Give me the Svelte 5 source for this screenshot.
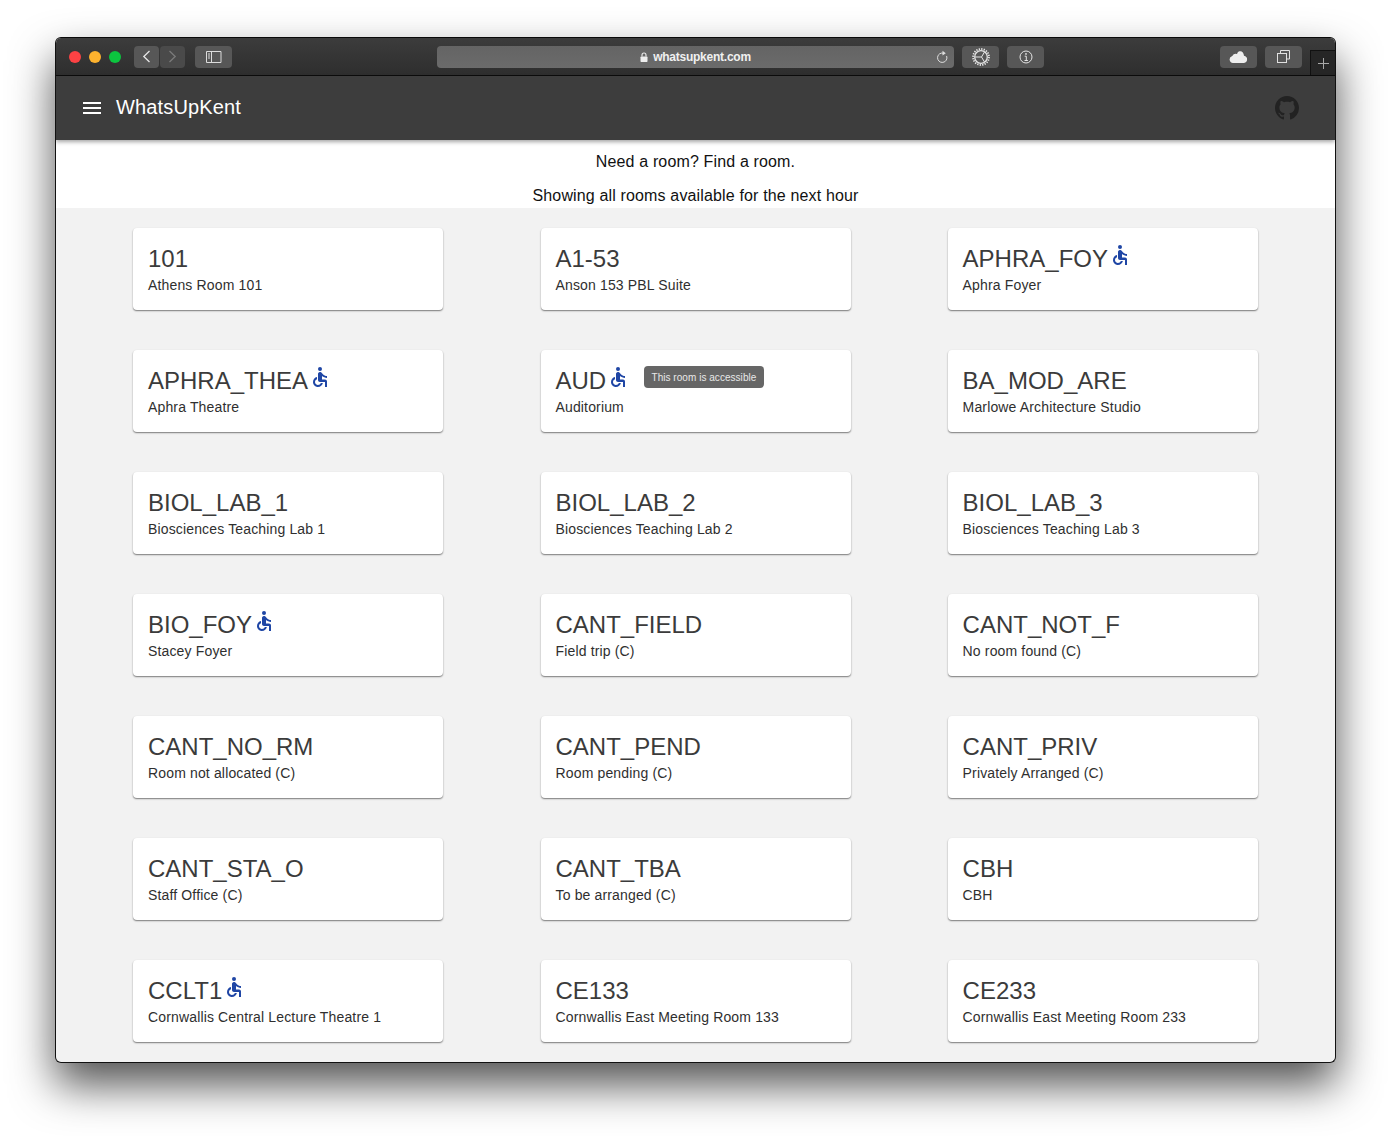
<script>
  const rooms = [
    { code: '101', name: 'Athens Room 101' },
    { code: 'A1-53', name: 'Anson 153 PBL Suite' },
    { code: 'APHRA_FOY', name: 'Aphra Foyer', access: true },
    { code: 'APHRA_THEA', name: 'Aphra Theatre', access: true },
    { code: 'AUD', name: 'Auditorium', access: true, tip: true },
    { code: 'BA_MOD_ARE', name: 'Marlowe Architecture Studio' },
    { code: 'BIOL_LAB_1', name: 'Biosciences Teaching Lab 1' },
    { code: 'BIOL_LAB_2', name: 'Biosciences Teaching Lab 2' },
    { code: 'BIOL_LAB_3', name: 'Biosciences Teaching Lab 3' },
    { code: 'BIO_FOY', name: 'Stacey Foyer', access: true },
    { code: 'CANT_FIELD', name: 'Field trip (C)' },
    { code: 'CANT_NOT_F', name: 'No room found (C)' },
    { code: 'CANT_NO_RM', name: 'Room not allocated (C)' },
    { code: 'CANT_PEND', name: 'Room pending (C)' },
    { code: 'CANT_PRIV', name: 'Privately Arranged (C)' },
    { code: 'CANT_STA_O', name: 'Staff Office (C)' },
    { code: 'CANT_TBA', name: 'To be arranged (C)' },
    { code: 'CBH', name: 'CBH' },
    { code: 'CCLT1', name: 'Cornwallis Central Lecture Theatre 1', access: true },
    { code: 'CE133', name: 'Cornwallis East Meeting Room 133' },
    { code: 'CE233', name: 'Cornwallis East Meeting Room 233' },
  ];
</script>

<div class="page">
  <div class="window">
    <header class="chrome">
      <span class="light red"></span>
      <span class="light amber"></span>
      <span class="light green"></span>

      <div class="btn-pair">
        <span class="btn nav">
          <svg width="9" height="13" viewBox="0 0 9 13"><path d="M7.500 1 1.800 6.500l5.700 5.500" fill="none" stroke="#e6e6e6" stroke-width="1.300"/></svg>
        </span>
        <span class="btn nav">
          <svg width="9" height="13" viewBox="0 0 9 13"><path d="M1.500 1l5.700 5.500L1.500 12" fill="none" stroke="#7b7b7b" stroke-width="1.300"/></svg>
        </span>
      </div>

      <span class="btn side">
        <svg width="16" height="12" viewBox="0 0 16 12"><path d="M.5.5h14.500v11H.5zM5.500.5v11" fill="none" stroke="#dcdcdc"/><path d="M2 3h2M2 5h2M2 7h2" stroke="#dcdcdc"/></svg>
      </span>

      <div class="url">
        <span class="addr">
          <svg width="8" height="10" viewBox="0 0 8 10"><path d="M2 4.500V3a2 2 0 0 1 4 0v1.500" fill="none" stroke="#eee" stroke-width="1.100"/><rect x=".5" y="4.500" width="7" height="5.500" rx=".8" fill="#eee"/></svg>
          whatsupkent.com
        </span>
        <svg class="reload" width="12" height="14" viewBox="0 0 12 14"><path d="M7.800 3.300A4.700 4.700 0 1 0 10.600 6" fill="none" stroke="#ddd" stroke-width="1"/><path d="M6.500.8 9.800 3.200 6.500 5.400z" fill="#ddd"/></svg>
      </div>

      <span class="btn tool">
        <svg width="20" height="20" viewBox="0 0 20 20">
          <circle cx="10" cy="10" r="8" fill="none" stroke="#e4e4e4" stroke-width="1.800" stroke-dasharray="1.300 1.210"/>
          <circle cx="10" cy="10" r="6.300" fill="none" stroke="#e4e4e4" stroke-width="1.300"/>
          <path d="M4 10h6.500l3-5M10.500 10l3 5" fill="none" stroke="#e4e4e4" stroke-width="1"/>
        </svg>
      </span>
      <span class="btn tool">
        <svg width="14" height="14" viewBox="0 0 14 14"><circle cx="7" cy="7" r="6" fill="none" stroke="#e4e4e4"/><path d="M5.700 6.200H7.300V10.500M5.500 10.500h3.400" fill="none" stroke="#e4e4e4"/><circle cx="7" cy="3.900" r=".9" fill="#e4e4e4"/></svg>
      </span>

      <span class="btn tool cloud">
        <svg width="19" height="12" viewBox="0 0 19 12"><path d="M4 12a3.500 3.500 0 0 1-.7-6.900A4 4 0 0 1 8 3a5 5 0 0 1 1.700-2.400c2.700-1.300 5 .6 5.300 4.100A3.700 3.700 0 0 1 15 12z" fill="#eee"/></svg>
      </span>
      <span class="btn tool copy">
        <svg width="13" height="13" viewBox="0 0 13 13"><path d="M3.500 3V.5h9v8.500H10" fill="none" stroke="#e0e0e0"/><rect x=".5" y="3.500" width="9" height="9" fill="none" stroke="#e0e0e0"/></svg>
      </span>
      <span class="newtab">
        <svg width="11" height="11" viewBox="0 0 11 11"><path d="M5.500 0v11M0 5.500h11" stroke="#a8a8a8"/></svg>
      </span>
    </header>

    <div class="appbar">
      <svg class="menu" width="18" height="12" viewBox="0 0 18 12"><path d="M0 0h18v2H0zM0 5h18v2H0zM0 10h18v2H0z" fill="#fff"/></svg>
      <span class="brand">WhatsUpKent</span>
      <svg class="github" width="24" height="24" viewBox="0 0 16 16"><path fill="#222" d="M8 0C3.580 0 0 3.580 0 8c0 3.540 2.290 6.530 5.470 7.590.4.070.55-.17.55-.38 0-.19-.01-.82-.01-1.490-2.010.37-2.530-.49-2.690-.94-.09-.23-.48-.94-.82-1.130-.28-.15-.68-.52-.01-.53.63-.01 1.080.58 1.230.82.720 1.210 1.870.87 2.330.66.070-.52.280-.87.510-1.070-1.780-.2-3.640-.89-3.640-3.950 0-.87.310-1.590.820-2.150-.08-.2-.36-1.020.08-2.120 0 0 .67-.21 2.200.82.640-.18 1.320-.27 2-.27s1.360.09 2 .27c1.530-1.040 2.200-.82 2.200-.82.440 1.100.16 1.920.08 2.120.51.560.82 1.270.82 2.150 0 3.070-1.870 3.750-3.650 3.950.29.250.54.730.54 1.480 0 1.070-.01 1.930-.01 2.200 0 .21.150.460.550.380A8.013 8.013 0 0 0 16 8c0-4.420-3.580-8-8-8z"/></svg>
    </div>

    <div class="intro">
      <p>Need a room? Find a room.</p>
      <p>Showing all rooms available for the next hour</p>
    </div>

    <main class="grid">
      {#each rooms as room}
        <article class="card">
          <h2>
            {room.code}
            {#if room.access}
              <svg class="access" width="24" height="24" viewBox="0 0 24 24"><circle cx="12" cy="4" r="2"/><path d="M19 13v-2c-1.540.02-3.090-.75-4.070-1.830l-1.290-1.430c-.17-.19-.38-.34-.61-.45-.01 0-.01-.01-.02-.01H13c-.35-.2-.75-.3-1.190-.26C10.760 7.110 10 8.040 10 9.090V15c0 1.100.9 2 2 2h5v5h2v-5.500c0-1.100-.9-2-2-2h-3v-3.450c1.290 1.070 3.250 1.940 5 1.950zm-6.170 5c-.41 1.160-1.520 2-2.830 2-1.660 0-3-1.340-3-3 0-1.310.84-2.410 2-2.830V12.100c-2.280.46-4 2.480-4 4.900 0 2.760 2.240 5 5 5 2.420 0 4.440-1.720 4.900-4h-2.070z"/></svg>
            {/if}
          </h2>
          <p>{room.name}</p>
          {#if room.tip}
            <span class="tip">This room is accessible</span>
          {/if}
        </article>
      {/each}
    </main>
  </div>
</div>

<style>
  :global(body) {
    margin: 0;
    background: #fff;
    font-family: "Liberation Sans", Arial, sans-serif;
  }

  .page {
    box-sizing: border-box;
    height: 1136px;
    padding: 37px 55px 0;
    overflow: hidden;
  }

  .window {
    box-sizing: border-box;
    width: 1281px;
    height: 1026px;
    border: 1px solid #111;
    border-top-color: #0a0a0a;
    border-radius: 6px;
    overflow: hidden;
    background: #f2f2f2;
    box-shadow: 0 22px 44px rgba(0, 0, 0, .68);
  }

  /* title bar */
  .chrome {
    display: flex;
    align-items: center;
    height: 38px;
    box-sizing: border-box;
    padding: 0 0 0 13px;
    background: linear-gradient(#3c3c3c, #2e2e2e);
    border-bottom: 1px solid #0c0c0c;
  }
  .light { width: 12px; height: 12px; border-radius: 50%; margin-right: 8px; }
  .red { background: #fc4244; }
  .amber { background: #fdb22e; }
  .green { background: #0cc53f; margin-right: 0; }

  .btn {
    display: flex;
    align-items: center;
    justify-content: center;
    height: 22px;
    border-radius: 4px;
    background: #575757;
  }
  .btn-pair { display: flex; gap: 1px; margin-left: 13px; }
  .nav { width: 25px; }
  .nav + .nav { background: #4a4a4a; }
  .side { width: 37px; margin-left: 10px; }

  .url {
    position: relative;
    display: flex;
    align-items: center;
    justify-content: center;
    width: 517px;
    height: 22px;
    margin-left: 205px;
    border-radius: 4px;
    background: linear-gradient(#646464, #6b6b6b);
  }
  .addr {
    display: flex;
    align-items: center;
    gap: 5px;
    padding-top: 1px;
    color: #f0f0f0;
    font-size: 12px;
    font-weight: bold;
    letter-spacing: -.02em;
  }
  .reload { position: absolute; right: 6px; top: 4px; }

  .tool { width: 37px; margin-left: 8px; }
  .cloud { margin-left: 176px; }
  .copy { margin-left: 8px; }

  .newtab {
    display: flex;
    align-items: center;
    justify-content: center;
    align-self: flex-end;
    width: 25px;
    height: 25px;
    margin-left: 8px;
    background: #262626;
    box-sizing: border-box;
    border: 1px solid #111;
    border-right: 0;
    border-bottom: 0;
  }

  /* app bar */
  .appbar {
    position: relative;
    z-index: 1;
    display: flex;
    align-items: center;
    height: 64px;
    padding: 0 36px 0 27px;
    background: #3d3d3d;
    box-shadow: 0 2px 4px rgba(0, 0, 0, .35);
  }
  .brand {
    margin: -2px 0 0 15px;
    color: #fff;
    font-size: 20px;
    letter-spacing: .0075em;
  }
  .github { margin-left: auto; }

  .intro {
    height: 68px;
    background: #fff;
    color: #111;
    font-size: 16px;
    letter-spacing: .00938em;
    text-align: center;
  }
  .intro p { margin: 0; padding-top: 13px; height: 21px; line-height: 18px; }

  /* room cards */
  .grid {
    display: grid;
    grid-template-columns: repeat(3, 310px);
    justify-content: space-between;
    row-gap: 40px;
    padding: 20px 77px 0;
  }
  .card {
    position: relative;
    box-sizing: border-box;
    height: 82px;
    padding: 16px 15px 0;
    border-radius: 4px;
    background: #fff;
    box-shadow: 0 1px 1px rgba(0, 0, 0, .25), 0 1px 2px rgba(0, 0, 0, .3);
  }
  .card:nth-child(3n) { padding-left: 14.6px; }
  h2 {
    display: flex;
    align-items: flex-start;
    margin: 0;
    color: #3b3b3b;
    font-size: 24px;
    font-weight: 400;
    line-height: 30px;
  }
  .access { margin: -1px 0 0 0; fill: #1f46a5; }
  .card p {
    margin: 1px 0 0;
    color: #2f2f2f;
    font-size: 14px;
    letter-spacing: .01071em;
    line-height: 20px;
  }
  .tip {
    position: absolute;
    left: 103px;
    top: 16px;
    padding: 0 8px;
    height: 22px;
    line-height: 23px;
    border-radius: 4px;
    background: #666;
    color: #e8e8e8;
    font-size: 10px;
    letter-spacing: .004em;
  }
</style>
